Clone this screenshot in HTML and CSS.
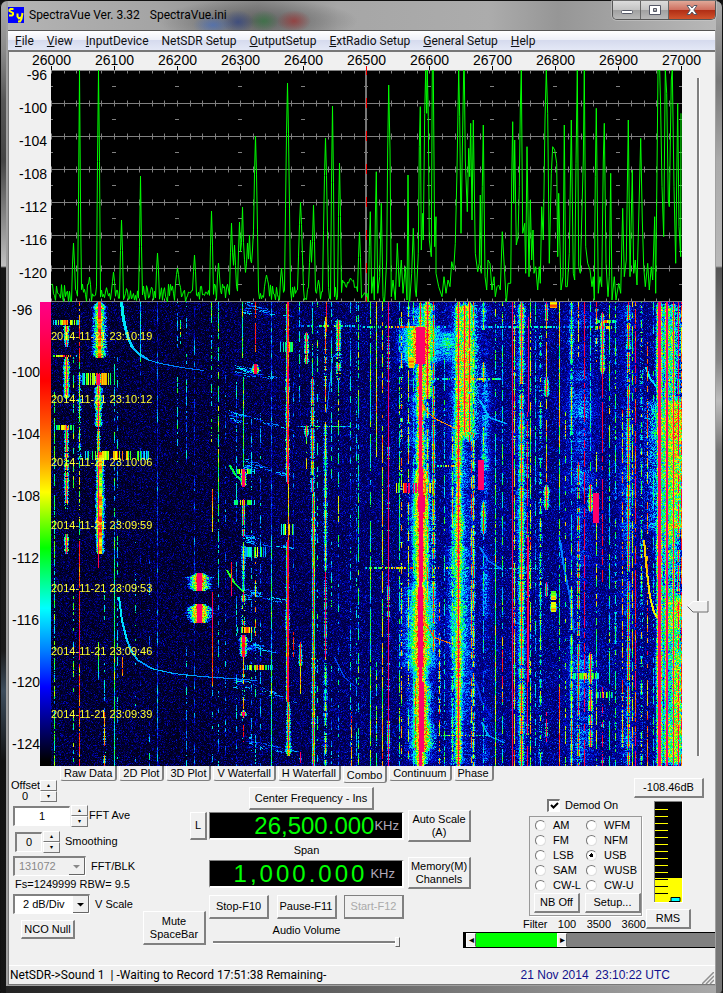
FILE: index.html
```html
<!DOCTYPE html>
<html lang="en">
<head>
<meta charset="utf-8">
<title>SpectraVue Ver. 3.32</title>
<link rel="stylesheet" href="styles.css">
</head>
<body>
<div class="window">
  <header class="titlebar">
    <svg class="app-icon" width="16" height="16" viewBox="0 0 16 16" aria-hidden="true">
      <rect width="16" height="16" fill="#00f"/>
      <path d="M5.500 2H2.500L1.500 3V4L5 6V7.500L4 8.500H1M9.500 6.500V9.500L11 11.500L13.500 10M14.500 6L13.500 12L12 14.500H10" fill="none" stroke="#ff0" stroke-width="2"/>
    </svg>
    <h1 class="title"><span>SpectraVue Ver. 3.32</span><span>SpectraVue.ini</span></h1>
    <div class="caption">
      <button class="cap" aria-label="Minimize"><svg width="14" height="12" viewBox="0 0 14 12"><rect x="1.500" y="6.500" width="11" height="3" rx="1" fill="#fff" stroke="#555866"/></svg></button>
      <button class="cap" aria-label="Maximize"><svg width="14" height="12" viewBox="0 0 14 12"><path d="M1.500 1.500h11v9h-11zM5.500 4.500v3h3v-3z" fill="#fff" fill-rule="evenodd" stroke="#555866"/></svg></button>
      <button class="cap close" aria-label="Close"><svg width="14" height="12" viewBox="0 0 14 12"><path d="M2 1.500h3l2 2.500 2-2.500h3L8.800 6l3.200 4.500H9L7 8l-2 2.500H2L5.200 6z" fill="#fff" stroke="#555866"/></svg></button>
    </div>
  </header>
  <nav class="menu">
    <a href="#"><u>F</u>ile</a><a href="#"><u>V</u>iew</a><a href="#"><u>I</u>nputDevice</a><a href="#">NetSDR Setup</a><a href="#"><u>O</u>utputSetup</a><a href="#"><u>E</u>xtRadio Setup</a><a href="#"><u>G</u>eneral Setup</a><a href="#"><u>H</u>elp</a>
  </nav>
  <main class="client">
    <section class="plots">
      <div class="level-axis"><span>-96</span><span>-100</span><span>-104</span><span>-108</span><span>-112</span><span>-116</span><span>-120</span></div>
      <div class="freq-axis"><span>26000</span><span>26100</span><span>26200</span><span>26300</span><span>26400</span><span class="centre">26500</span><span>26600</span><span>26700</span><span>26800</span><span>26900</span><span>27000</span></div>
      <svg class="spectrum" viewBox="0 0 631 232" preserveAspectRatio="none" role="img" aria-label="Spectrum">
        <rect width="631" height="232" fill="#000"/>
        <path id="grid" fill="none" stroke="#808080"/>
        <path d="M315 0V232" stroke="#777" stroke-width="2"/>
        <path d="M315.500 0V5M315.500 28V38M315.500 61V71M315.500 94V104M315.500 127V137M315.500 160V170M315.500 193V203M315.500 227V232" stroke="#f00"/>
        <path id="trace" fill="none" stroke="#0f0"/>
      </svg>
      <div class="colour-axis">
        <div class="colour-labels"><span>-96</span><span>-100</span><span>-104</span><span>-108</span><span>-112</span><span>-116</span><span>-120</span><span>-124</span></div>
        <div class="colour-bar"></div>
      </div>
      <div class="waterfall">
        <canvas id="waterfall" width="631" height="464"></canvas>
        <div class="stamps"><span>2014-11-21 23:10:19</span><span>2014-11-21 23:10:12</span><span>2014-11-21 23:10:06</span><span>2014-11-21 23:09:59</span><span>2014-11-21 23:09:53</span><span>2014-11-21 23:09:46</span><span>2014-11-21 23:09:39</span></div>
      </div>
      <div class="gain"><input class="vslider" type="range" min="0" max="1000" value="785" aria-label="Level"></div>
    </section>

    <div class="tabs">
      <button>Raw Data</button><button>2D Plot</button><button>3D Plot</button><button>V Waterfall</button><button>H Waterfall</button><button class="on">Combo</button><button>Continuum</button><button>Phase</button>
    </div>

    <section class="deck">
      <div class="fft">
        <div class="row offset"><span class="off">Offset<br>0</span><span class="spin"><button aria-label="Offset up">▴</button><button aria-label="Offset down">▾</button></span></div>
        <div class="row"><input id="ave" class="ave" value="1"><span class="spin"><button aria-label="Average up">▴</button><button aria-label="Average down">▾</button></span><label for="ave">FFT Ave</label></div>
        <div class="row smooth"><input id="smooth" class="num" value="0"><span class="spin"><button aria-label="Smoothing up">▴</button><button aria-label="Smoothing down">▾</button></span><label for="smooth">Smoothing</label></div>
        <div class="row wide"><select id="blk" class="blk" disabled><option>131072</option></select><label for="blk">FFT/BLK</label></div>
        <p class="fs">Fs=1249999 RBW= 9.5</p>
        <div class="row wide"><select id="vs" class="vs"><option>2 dB/Div</option></select><label for="vs">V Scale</label></div>
        <button class="btn nco">NCO Null</button>
      </div>
      <div class="side"><button class="btn lock">L</button><button class="btn mute">Mute<br>SpaceBar</button></div>
      <div class="tuning">
        <button class="btn cf">Center Frequency - Ins</button>
        <output class="led">26,500.000<small>KHz</small></output>
        <span class="cap-text">Span</span>
        <output class="led spaced"><span>1</span><span>,</span><span>0</span><span>0</span><span>0</span><span>.</span><span>0</span><span>0</span><span>0</span><small>KHz</small></output>
        <div class="run"><button class="btn">Stop-F10</button><button class="btn">Pause-F11</button><button class="btn start" disabled>Start-F12</button></div>
        <label class="cap-text" for="vol">Audio Volume</label>
        <input id="vol" class="hslider" type="range" value="100">
      </div>
      <div class="radio-side">
        <div class="radio-top">
          <div class="memory"><button class="btn">Auto Scale<br>(A)</button><button class="btn">Memory(M)<br>Channels</button></div>
          <div class="receiver">
            <button class="btn db">-108.46dB</button>
            <div class="receiver-row">
              <div class="demod">
                <label class="check"><input type="checkbox" checked>Demod On</label>
                <div class="modes">
                  <label><input type="radio" name="m">AM</label><label><input type="radio" name="m">WFM</label>
                  <label><input type="radio" name="m">FM</label><label><input type="radio" name="m">NFM</label>
                  <label><input type="radio" name="m">LSB</label><label><input type="radio" name="m" checked>USB</label>
                  <label><input type="radio" name="m">SAM</label><label><input type="radio" name="m">WUSB</label>
                  <label><input type="radio" name="m">CW-L</label><label><input type="radio" name="m">CW-U</label>
                  <button class="btn">NB Off</button><button class="btn">Setup...</button>
                </div>
                <div class="filter"><span>Filter</span><span>100</span><span>3500</span><span>3600</span></div>
              </div>
              <div class="meter">
                <svg width="29" height="102" viewBox="0 0 29 102" role="img" aria-label="Signal meter">
                  <rect width="29" height="102" fill="#fff"/><rect width="28" height="101" fill="#808080"/>
                  <rect x="1" y="1" width="27" height="100" fill="#000"/><rect x="1" y="77" width="27" height="24" fill="#ff0"/>
                  <path d="M1 8.500h13M1 15.500h13M1 22.500h13M1 29.500h13M1 36.500h13M1 43.500h13M1 50.500h13M1 57.500h13M1 64.500h13M1 71.500h13" stroke="#ff0"/>
                  <path d="M1 78.500h13M1 85.500h13M1 92.500h13" stroke="#000"/>
                  <path d="M15 100.500h2v-4h9v4z" fill="#0ff" stroke="#000"/>
                </svg>
                <button class="btn">RMS</button>
              </div>
            </div>
          </div>
        </div>
        <div class="passband"><button aria-label="Low edge">◂</button><i></i><button aria-label="High edge">▸</button></div>
      </div>
    </section>
    <footer class="status">
      <span>NetSDR-&gt;Sound 1&nbsp; | -Waiting to Record 17:51:38 Remaining-</span>
      <time>21 Nov 2014&nbsp; 23:10:22 UTC</time>
      <svg width="12" height="12" viewBox="0 0 12 12" aria-hidden="true"><path d="M0 12L12 0M4 12L12 4M8 12L12 8" stroke="#909090" stroke-width="1.500"/></svg>
    </footer>
  </main>
</div>
<script src="script.js"></script>
</body>
</html>
```
FILE: styles.css
```css
* { box-sizing: border-box; }
body { margin: 0; background: #111; font: 11px/13px "Liberation Sans", Arial, sans-serif; color: #000; }
button, input, select { font: inherit; color: inherit; margin: 0; padding: 0; border-radius: 0; }
p { margin: 0; }

.window {
  display: flex; flex-direction: column; min-height: 100vh; padding: 0 7px 8px;
  border-radius: 7px 7px 4px 4px; border: 1px solid #111; border-width: 1px 1px 0;
  background:
    linear-gradient(#aaa 0, #8a8a8a 50px, #555 100px, #444 160px, #c0c0c0 265px, #151515 267px, #1b1b1b 650px, #3d4d5c 690px, #121212 760px, #151515 100%) left / 5px 100% no-repeat,
    linear-gradient(#aaa 0, #777 80px, #aaa 160px, #b8b8b8 265px, #555 267px, #888 360px, #bbb 400px, #777 450px, #777 100%) right / 6px 100% no-repeat,
    linear-gradient(90deg, #222, #666 50%, #aaa) bottom / 100% 7px no-repeat,
    #a0a0a0;
}

.titlebar {
  display: flex; align-items: flex-start; height: 29px; margin: 0 -1px 0 0;
  background:
    radial-gradient(ellipse 20px 10px at 205px 24px, #3e6cc999, transparent),
    radial-gradient(ellipse 16px 12px at 230px 21px, #243c8a99, transparent),
    radial-gradient(ellipse 15px 11px at 256px 20px, #2c7b3c99, transparent),
    radial-gradient(ellipse 17px 11px at 286px 20px, #a02c2caa, transparent),
    radial-gradient(ellipse 100px 22px at 250px 20px, #555555cc, transparent),
    linear-gradient(90deg, #b4b4b4 0, #a4a4a4 150px, #8a8a8a 250px, #a6a6a6 330px, #acacac 480px, #969696 550px, #b8b8b8 100%);
}
.app-icon { margin: 6px 5px 0 0; }
.title { display: flex; gap: 10px; margin: 5px auto 0 0; font: 12px/18px Roboto, sans-serif; }
.caption { display: flex; border: 1px solid #555; border-top: 0; border-radius: 0 0 5px 5px; overflow: hidden; box-shadow: 0 0 0 1px #ccc8; }
.cap { display: grid; place-items: center; width: 28px; height: 18px; border: 0; border-right: 1px solid #666; background: linear-gradient(#dcdcdc, #c4c4c4 48%, #a0a0a0 50%, #b8b8b8); }
.cap.close { width: 46px; border: 0; background: linear-gradient(#e0a898, #cf7060 48%, #b02c14 50%, #d0532c); }

.menu {
  display: flex; align-items: center; gap: 13px; height: 20px; padding: 0 7px;
  border-top: 1px solid #555; background: linear-gradient(#fff, #eef0f8 45%, #d6dbee 50%, #e4e8f6);
  font: 12px/18px Roboto, sans-serif;
}
.menu a { color: #111; text-decoration: none; white-space: nowrap; }

.client { flex: 1; display: flex; flex-direction: column; background: #f0f0f0; border: 1px solid #777; border-width: 2px 0 1px 1px; }

.plots { display: grid; grid-template-columns: 42px 1fr 33px; grid-template-rows: 18px 232px 464px; font-size: 14px; line-height: 16px; }
.level-axis { grid-area: 1 / 1 / 3 / 2; display: flex; flex-direction: column; padding: 7px 4px 0 0; text-align: right; }
.level-axis span { line-height: 33px; }
.freq-axis { grid-area: 1 / 2; display: flex; justify-content: space-between; }
.freq-axis span { display: flex; justify-content: center; width: 1px; height: 18px; background: linear-gradient(#000, #000) bottom / 1px 4px no-repeat; }
.freq-axis .centre { background-image: linear-gradient(#f00, #f00); }
.spectrum { grid-area: 2 / 2; display: block; width: 100%; height: 100%; }
.colour-axis { grid-area: 3 / 1; display: flex; justify-content: space-between; }
.colour-labels { display: flex; flex-direction: column; gap: 46px; width: 31px; padding-left: 3px; }
.colour-bar { width: 11px; background: linear-gradient(#ff0088 0, #ff0060 6%, #f00 17%, #ff5000 26%, #ffa000 34%, #ff0 41%, #0f0 53%, #0ff 66%, #0080ff 75%, #00f 83%, #000080 91%, #000 99%); }
.waterfall { grid-area: 3 / 2; position: relative; }
.waterfall canvas { display: block; width: 100%; height: 100%; }
.stamps { position: absolute; inset: 28px auto auto 0; display: flex; flex-direction: column; gap: 50px; font-size: 11px; line-height: 13px; color: #ffff30; }
.gain { grid-area: 1 / 3 / 4 / 4; padding: 26px 6px 10px 5px; display: flex; }

input[type=range] { appearance: none; background: none; }
.vslider { writing-mode: vertical-lr; width: 22px; height: 678px; }
.vslider::-webkit-slider-runnable-track { width: 22px; height: 100%; background: linear-gradient(90deg, #808080 2px, #fff 2px) center / 3px 100% no-repeat; }
.vslider::-webkit-slider-thumb { appearance: none; width: 22px; height: 12px; background: url("data:image/svg+xml,%3Csvg xmlns='http://www.w3.org/2000/svg' width='22' height='12'%3E%3Cpath d='M.5 5.500L6 .5H21.500V11H6z' fill='%23f0f0f0' stroke='%23fff'/%3E%3Cpath d='M.5 5.500L6 11H21V0' fill='none' stroke='%23666'/%3E%3C/svg%3E"); }
.hslider { width: 187px; height: 12px; align-self: center; margin-top: -4px; }
.hslider::-webkit-slider-runnable-track { height: 10px; background: linear-gradient(#808080 2px, #fff 2px) center / 100% 3px no-repeat; }
.hslider::-webkit-slider-thumb { appearance: none; width: 5px; height: 10px; background: #f0f0f0; border: 1px solid #fff; border-right-color: #666; border-bottom-color: #666; }

.tabs { display: flex; align-items: flex-start; gap: 2px; padding-left: 51px; height: 17px; }
.tabs button { height: 15px; padding: 0 3px; line-height: 13px; white-space: nowrap; background: #f0f0f0; border: 1px solid #fff; border-width: 0 2px 1px 1px; border-right-color: #808080; border-bottom-color: #808080; border-radius: 0 0 3px 3px; }
.tabs .on { height: 17px; padding-top: 3px; }

.btn { background: #f0f0f0; border: 1px solid #fff; border-right: 2px solid #808080; border-bottom: 2px solid #808080; white-space: nowrap; text-align: center; }
.btn:disabled { color: #aaa; border: 2px solid #808080; border-top: 1px solid #808080; border-left: 1px solid #808080; }

.deck { flex: 1; display: flex; }
.fft { width: 134px; padding: 0 0 0 4px; display: flex; flex-direction: column; align-items: flex-start; }
.row { display: flex; align-items: center; height: 23px; gap: 1px; white-space: nowrap; }
.offset { margin: -4px 0 2px -2px; }
.off { width: 28px; line-height: 11px; text-align: center; }
.spin { display: flex; flex-direction: column; width: 17px; }
.spin button { height: 11px; padding: 0; font-size: 6px; line-height: 8px; background: #f0f0f0; border: 1px solid #fff; border-right-color: #777; border-bottom-color: #777; }
.ave, .num { height: 20px; text-align: center; border: 2px solid #808080; border-right: 1px solid #fff; border-bottom: 1px solid #fff; }
.ave { width: 57px; background: #fff; }
.num { width: 27px; background: #f0f0f0; }
.smooth { margin: 3px 0 2px 2px; }
.smooth label { margin-left: 4px; }
.wide { gap: 5px; height: 22px; }
select { appearance: none; height: 20px; padding-left: 4px; border: 2px solid #808080; border-right: 1px solid #fff; border-bottom: 1px solid #fff; background: #fff url("data:image/svg+xml,%3Csvg xmlns='http://www.w3.org/2000/svg' width='16' height='17'%3E%3Cpath fill='%23f0f0f0' d='M0 0h16v17H0z'/%3E%3Cpath d='M15.500 0v16.500H0' fill='none' stroke='%23666'/%3E%3Cpath d='M4 7h7L7.500 10.500z'/%3E%3C/svg%3E") right center no-repeat; }
.blk { width: 73px; background-color: #f0f0f0; background-image: url("data:image/svg+xml,%3Csvg xmlns='http://www.w3.org/2000/svg' width='16' height='17'%3E%3Cpath fill='%23f0f0f0' d='M0 0h16v17H0z'/%3E%3Cpath d='M15.500 0v16.500H0' fill='none' stroke='%23666'/%3E%3Cpath d='M4 7h7L7.500 10.500z' fill='%23888'/%3E%3C/svg%3E"); }
.blk:disabled { color: #888; opacity: 1; }
.vs { width: 77px; padding-left: 8px; }
.fs { margin: 1px 0 2px 2px; line-height: 13px; white-space: nowrap; }
.nco { width: 54px; height: 19px; margin: 5px 0 0 8px; }

.side { width: 66px; display: flex; flex-direction: column; justify-content: space-between; padding: 29px 2px 20px 0; }
.lock { align-self: flex-end; width: 17px; height: 28px; }
.mute { width: 63px; height: 34px; }

.tuning { width: 195px; display: flex; flex-direction: column; align-items: stretch; padding-top: 4px; }
.cf { align-self: center; width: 125px; height: 23px; margin: 0 0 2px 10px; }
.led { display: flex; justify-content: flex-end; align-items: center; height: 28px; padding-right: 3px; background: #000; border: 1px solid #808080; border-right: 2px solid #fff; border-bottom: 2px solid #fff; color: #0f0; font-size: 24px; line-height: 25px; }
.led small { font-size: 13px; color: #b0a8b8; }
.spaced { gap: 3px; padding-right: 7px; }
.spaced small { margin-left: 3px; }
.cap-text { align-self: center; line-height: 13px; margin: 4px 0 3px; }
.run { display: flex; justify-content: space-between; margin: 7px 0 1px; }
.run .btn { width: 60px; height: 24px; }

.radio-side { flex: 1; display: flex; flex-direction: column; padding-left: 4px; min-width: 0; }
.radio-top { display: flex; }
.memory { display: flex; flex-direction: column; gap: 15px; padding-top: 27px; }
.memory .btn { width: 63px; height: 32px; }
.receiver { flex: 1; display: flex; flex-direction: column; align-items: flex-end; padding-right: 11px; margin-top: -5px; }
.db { width: 70px; height: 20px; }
.receiver-row { display: flex; margin-right: 13px; }
.demod { width: 123px; padding: 0 4px 0 6px; }
.check { display: flex; align-items: center; gap: 5px; height: 14px; margin: 0 0 4px 18px; }
.check input { appearance: none; width: 13px; height: 13px; border: 2px solid #777; border-right: 1px solid #fff; border-bottom: 1px solid #fff; background: #fff url("data:image/svg+xml,%3Csvg xmlns='http://www.w3.org/2000/svg' width='9' height='9'%3E%3Cpath d='M1 4l2.500 2.500L8 2' fill='none' stroke='%23000' stroke-width='2'/%3E%3C/svg%3E") center no-repeat; }
.modes { display: grid; grid-template-columns: 46px 56px; grid-template-rows: repeat(5, 15px) 20px; column-gap: 5px; height: 100px; padding: 1px 0 0 4px; border: 1px solid #999; box-shadow: 1px 1px #fff; }
.modes label { display: flex; align-items: center; gap: 7px; padding-left: 1px; white-space: nowrap; }
.modes input { appearance: none; flex: none; width: 11px; height: 11px; border-radius: 50%; border: 1px solid #777; border-right-color: #ddd; border-bottom-color: #ddd; background: #fff; }
.modes input:checked { background: radial-gradient(#000 2px, #fff 2px); }
.filter { display: flex; justify-content: space-between; margin: 2px -4px 0 -6px; line-height: 13px; }
.meter { display: flex; flex-direction: column; align-items: center; gap: 6px; padding-top: 3px; }
.meter .btn { width: 45px; height: 20px; }
.passband { display: flex; height: 16px; margin: 1px 0 0 55px; border: 1px solid #000; border-left-width: 3px; border-right: 0; background: #808080; }
.passband button { width: 10px; border: 1px solid #fff; border-right-color: #666; background: #f0f0f0; font-size: 10px; line-height: 10px; }
.passband i { width: 81px; background: #0f0; }

.status { display: flex; align-items: flex-end; height: 19px; padding: 0 1px; border-top: 1px solid #fff; font: 12px/17px Roboto, sans-serif; white-space: nowrap; }
.status time { margin: 0 32px 0 auto; color: #10108c; font: 12px/17px "Liberation Sans", sans-serif; }
```
FILE: script.js
```js
// Repeatable pseudo-random source.
let seed = 12345;
function rnd() {
  seed = (seed * 1664525 + 1013904223) >>> 0;
  return seed / 4294967296;
}

// Graticule: a line each 4 dB with minor ticks on it, dashes halfway between.
let grid = "";
for (let r = 0; r <= 7; r++) {
  const y = Math.min(r * 33 + 0.5, 231.5);
  grid += `M0 ${y}H631`;
  for (let i = 0; i <= 50; i++) grid += `M${Math.round(i * 12.61) + 0.5} ${y - 3}v6`;
  for (let i = 0; i <= 10; i++) grid += `M${i * 63 - 2} ${y + 16}h4`;
}
document.getElementById("grid").setAttribute("d", grid);

// Lower half of the span: [x, top, half width at the base].
const peaks = [
  [22,173,2],[28,0,1.5],[38,207,2],[47,0,2],[62,202,2],[70,150,2],[89,106,1.5],[106,183,2],[126,198,3],
  [143,185,2],[160,141,2],[167,193,2],[180,153,2],[183,175,2],[188,152,2],[191,137,2],[196,173,2],
  [198,165,2],[201,180,2],[204,66,3],[215,205,3],[230,198,2],[236,13,3],[249,132,3],[259,170,2],
  [262,135,2],[267,210,2],[274,68,3],[281,36,2],[288,93,2],[299,208,5],[308,162,2]];
let d = "";
for (let x = 0; x < 316; x++) {
  let y = 214 + rnd() * 18;
  if (x > 186 && x < 203) y = 185 + rnd() * 20;
  if (x > 290 && x < 306) y = 208 + rnd() * 10;
  for (const [px, top, w] of peaks) {
    const t = Math.abs(x - px);
    if (t < w) y = Math.min(y, top + (225 - top) * Math.pow(t / w, 1.3));
  }
  d += (x ? "L" : "M") + (x + 0.5) + " " + y.toFixed(1);
}
// Upper half of the span: turning points in thirds of a pixel.
const turns = [
  15,700,19,730,22,560,25,455,29,700,34,650,37,720,40,480,43,335,47,700,53,650,58,430,63,710,67,740,74,600,77,270,80,75,84,270,88,710,
  93,660,100,720,106,550,112,680,118,600,123,700,130,620,135,720,138,345,142,740,149,640,154,505,160,690,163,710,169,580,172,260,175,140,
  178,570,182,460,184,540,188,160,191,0,194,160,196,0,199,170,202,540,208,590,211,0,214,0,218,560,222,470,222,640,230,680,240,710,246,650,
  252,700,258,660,264,680,269,605,275,630,280,550,285,330,290,0,293,170,297,520,300,330,305,0,307,0,310,300,316,455,320,265,323,350,326,190,
  330,480,334,180,340,580,347,635,352,610,355,405,358,640,361,380,364,195,369,650,374,690,378,600,384,610,390,690,396,650,400,710,405,680,
  410,675,415,690,421,515,427,620,433,730,438,670,446,670,449,360,452,185,455,430,458,240,463,555,468,530,472,380,475,150,478,0,482,520,488,
  490,491,640,495,260,501,650,505,420,509,600,513,510,516,640,521,620,527,690,532,620,535,670,539,440,544,540,549,180,553,0,557,160,562,610,
  568,340,572,260,578,270,584,310,587,590,590,400,597,690,603,650,607,195,611,680,616,680,622,580,628,180,634,640,638,660,642,310,646,0,650,
  620,655,640,659,480,664,300,667,0,671,560,677,610,684,630,690,680,694,650,697,720,700,350,703,145,709,700,714,650,719,680,724,300,727,190,
  732,610,738,710,742,650,746,340,750,720,757,650,762,720,770,670,776,700,782,445,787,650,793,600,799,180,804,650,811,330,815,640,820,600,
  825,675,830,480,836,235,841,480,845,620,850,680,857,610,862,690,868,620,872,660,878,470,881,700,886,240,888,0,893,0,896,150,900,380,905,530,
  910,20,914,100,919,420,922,440,928,60,931,0,936,380,941,610,947,130,951,500,956,590,959,160];
for (let i = 0; i < turns.length; i += 2) {
  const x = Math.min(630, 311 + turns[i] / 3), y = Math.max(0, turns[i + 1] / 3 - 10);
  d += `L${x.toFixed(1)} ${y.toFixed(1)}`;
}
document.getElementById("trace").setAttribute("d", d);

// Waterfall: levels from 0 to 1, painted through the colour scale.
const W = 631, H = 464;
const field = new Float32Array(W * H);
for (let y = 0; y < H; y++) {
  for (let x = 0; x < W; x++) {
    const base = 0.05 + 0.08 * Math.min(1, Math.max(0, (x - 140) / 260));
    field[y * W + x] = base + rnd() * rnd() * 0.22;
  }
}
function put(x, y, v) {
  x = Math.round(x); y = Math.round(y);
  if (x >= 0 && x < W && y >= 0 && y < H) field[y * W + x] = Math.max(field[y * W + x], v);
}
// Broad glow: slow fading along the time axis, speckled, tapering to both sides.
function glow(x, y0, y1, level, half, speckle = 0.22) {
  let slow = 0, row = 0;
  for (let y = y0; y < y1; y++) {
    slow = slow * 0.97 + (rnd() - 0.5) * 0.05;
    row = row * 0.4 + (rnd() - 0.5) * 0.1;
    const edge = Math.min(1, (y - y0 + 3) / 9, (y1 - y + 3) / 9);
    for (let k = -half; k <= half; k++) {
      const fall = Math.pow(1 - Math.abs(k) / (half + 1), 0.75);
      put(x + k, y, (level + slow + row) * fall * edge + (rnd() - 0.5) * speckle);
    }
  }
}
// Carrier: centre x, first row, last row, level, core half width, halo width, on-time.
function carrier(x, y0, y1, level, core = 0, halo = 0, duty = 1) {
  let on = true, drift = 0, swell = 0;
  for (let y = y0; y < y1; y++) {
    if (rnd() < 0.4) on = rnd() < duty;
    drift = drift * 0.8 + (rnd() - 0.5) * 0.14;
    swell = swell * 0.95 + (rnd() - 0.5) * 0.16;
    for (let k = -core; k <= core; k++) if (on) put(x + k, y, level + drift * (level > 0.9 ? 0.2 : 1.2));
    const taper = Math.min(1, (y - y0 + 2) / 6, (y1 - y + 2) / 6);
    const reach = halo * (0.75 + swell + rnd() * 0.3) * taper;
    for (let k = 1; k <= reach; k++) {
      const fall = Math.pow(1 - k / (reach + 1), 0.9);
      const v = level * 0.8 * fall + (rnd() - 0.5) * 0.3;
      if (on || rnd() < 0.4) put(x - core - k, y, v);
      if (on || rnd() < 0.4) put(x + core + k, y, v + (rnd() - 0.5) * 0.2);
    }
  }
}
function curve(points, level, thick = 1) {
  for (let i = 0; i + 3 < points.length; i += 2) {
    const [x0, y0, x1, y1] = points.slice(i, i + 4);
    const n = Math.ceil(Math.hypot(x1 - x0, y1 - y0) * 2);
    for (let s = 0; s <= n; s++) {
      for (let t = 0; t < thick; t++) put(x0 + (x1 - x0) * s / n + t, y0 + (y1 - y0) * s / n, level - i * 0.008 + (rnd() - 0.5) * 0.05);
    }
  }
}
function comb(x0, x1, y0, y1, level) {
  for (let x = x0; x < x1; x++) {
    if (rnd() < 0.4) continue;
    const mid = 1 - Math.abs((x - x0) / (x1 - x0) - 0.5);
    const v = level * mid + (rnd() - 0.5) * 0.2;
    for (let y = y0; y < y1; y++) put(x, y, v);
  }
}
function wisp(x0, y0, x1, y1) {
  for (let i = 0; i < 30; i++) {
    const t = rnd() * rnd(), x = x0 + (x1 - x0) * t, y = y0 + (y1 - y0) * t + (rnd() - 0.4) * 12 * (1 - t);
    const n = 2 + rnd() * 8, v = 0.22 + rnd() * 0.2;
    for (let k = 0; k < n; k++) if (rnd() < 0.8) put(x + k, y + k * 0.2, v + (rnd() - 0.5) * 0.1);
  }
}

// Wide glows behind the strong signals.
glow(369, 0, 464, 0.36, 20);
glow(369, 20, 64, 0.62, 30);
glow(369, 280, 370, 0.5, 24);
glow(410, 0, 464, 0.32, 22);
glow(414, 0, 140, 0.6, 17, 0.36);
glow(407, 240, 350, 0.5, 14, 0.3);
glow(396, 26, 62, 0.42, 26);
glow(618, 0, 464, 0.5, 16, 0.34);
glow(624, 95, 230, 0.66, 36, 0.34);
glow(626, 290, 464, 0.62, 10, 0.34);
glow(470, 0, 464, 0.3, 10);
glow(530, 0, 464, 0.22, 26);
glow(576, 0, 464, 0.22, 16);
glow(434, 0, 464, 0.26, 8);

[
  [3,90,464,.5,0,0,.7],[15,20,45,1,0,3,.9],[15,55,97,1,0,4,.9],[15,123,207,1,0,3,.9],[15,232,252,1,0,3],
  [22,55,190,.5,0,0,.7],[22,285,464,.5,0,0,.5],[28,0,60,.85,0,0,.7],[28,60,238,.62,0,0,.6],[28,238,464,.86,0,0,.85],
  [28,70,160,.5,0,2,.4],[48,0,56,.9,1,8],[47,72,83,1,1,4],[47,83,125,.98,0,5],[47,125,150,.85,0,2],
  [47,150,252,.97,0,4],[49,150,252,.74,1,4],[47,252,266,.95],[47,340,378,.5],[63,55,238,.4,0,0,.5],
  [63,238,464,.5],[66,55,464,.36,0,0,.5],[53,410,464,.82,0,1,.9],[53,290,410,.42,0,0,.4],[71,355,378,.8,0,0,.7],
  [89,0,60,.48],[89,60,464,.18,0,0,.4],[84,215,464,.48,0,0,.15],[106,0,464,.27],[98,240,464,.3,0,0,.3],
  [126,0,160,.42,0,0,.5],[129,18,42,.5,0,0,.7],[135,0,160,.38,0,0,.6],[135,345,464,.38,0,0,.5],[143,0,464,.24,0,0,.8],
  [160,0,140,.48,0,0,.45],[161,187,230,.74],[161,290,384,.86],[161,384,464,.45,0,0,.3],[167,0,240,.5,0,0,.8],
  [167,240,464,.4,0,0,.4],[180,260,294,.88],[148,271,289,1,2,14],[148,302,321,1,2,14],
  [174,70,464,.28,0,0,.4],[185,80,464,.36,0,0,.5],[191,0,56,.5],[192,75,165,.5],[192,167,185,1,1,2],[192,197,235,1,0,2,.9],
  [192,240,290,.65,0,2,.8],[192,290,330,.95,0,2,.7],[192,333,355,.9,1,4],[192,355,440,.75,0,1,.8],[192,410,414,1,1,5],
  [204,0,50,.88,0,1,.8],[204,62,72,.95,1,4],[204,245,340,.7,0,1,.6],[204,340,464,.4,0,0,.5],
  [200,100,464,.34,0,0,.5],[209,100,464,.33,0,0,.5],[220,0,238,.3],[220,238,464,.45],
  [236,0,182,.97,0,2],[237,0,182,.8],[237,182,238,.74,0,1],[236,238,400,.92,0,2],[237,238,400,.9],[237,400,454,.88,0,3],[242,330,355,.88,0,1,.7],
  [248,0,100,.4,0,0,.7],[249,340,365,.85,0,2],[249,365,392,.7,0,1],[249,450,461,.95,0,1],[242,80,300,.3,0,0,.5],
  [255,30,62,1,0,3,.9],[255,123,135,.95,0,3],[255,135,170,.6,0,0,.5],[261,0,75,.5,0,0,.7],[261,75,190,.9,0,2,.9],
  [262,190,464,.9,0,2],[263,190,464,.5],[266,0,464,.45,0,0,.4],[274,15,110,.72,0,1,.8],[274,120,270,.65,0,2],[275,0,30,.9],
  [274,270,355,.95,0,1],[274,355,464,.65,0,2,.7],[280,0,180,.42,0,0,.7],[280,240,464,.35,0,0,.4],
  [287,15,78,.96,0,3,.9],[287,78,240,.5,0,0,.7],[287,240,464,.35,0,0,.5],[299,0,464,.34,0,0,.5],[305,0,464,.35,0,0,.5],
  [307,0,464,.48,0,0,.6],[300,410,464,.8,0,0,.6],
  [319,0,464,.52,0,0,.85],[325,0,155,.6],[325,360,464,.5,0,0,.6],[331,0,150,.65,0,0,.6],[331,150,464,.66,0,0,.9],
  [337,0,464,.98,0,1],[348,0,464,.5,0,0,.6],[350,10,464,.68,0,1,.5],[357,0,464,.6,0,1,.7],[362,0,464,.45,0,1,.7],
  [369,0,25,.9,0,3],[369,25,62,1,4,15],[360,55,66,.75,2,4],[369,62,165,1,1,6,1],[369,165,464,1,1,9,1],[370,165,280,1,1,11],[370,195,210,1,3,8],[376,0,97,.98,0,8],
  [369,285,365,1,2,12],[364,380,450,.85,0,3,.8],[371,380,450,1,1,12],[382,0,350,.9,0,2,.85],[376,100,300,.7,0,2,.7],
  [388,300,464,.75,0,1,.6],[393,30,464,.42,0,0,.6],[401,130,464,.58,0,2,.8],[407,0,464,1,0,6],[413,0,130,.95,0,5,.9],
  [418,0,140,.93,0,5,.9],[420,130,464,.8,0,1,.7],[422,0,464,.7,0,2,.7],[432,0,28,.6,0,3],[432,60,80,.75,0,3],
  [432,125,160,.65,0,3,.8],[432,200,232,.8,0,4],[432,232,464,.42,0,0,.6],[444,0,250,.5,0,0,.6],[444,250,464,.55],
  [451,0,464,.48,0,0,.7],[451,335,400,.85,0,0,.7],[461,0,464,.93],[463,0,464,.68,0,1,.8],[470,0,55,.96,0,4],[470,55,464,.92,0,4,.9],
  [477,15,110,.97],[476,110,464,.92,0,1,.95],[477,235,380,1,0,1],[479,0,464,.62,0,0,.7],[484,0,464,.4,0,0,.6],[489,30,464,.54,0,2,.6],
  [495,0,20,1,0,2],[495,75,95,1,0,3],[495,20,180,.68,0,0,.75],[495,183,208,1,0,4],[495,280,295,1,0,2],[495,410,440,.97,0,1,.8],
  [502,0,6,.76,3,1],[502,289,298,.66,2,2],[502,300,310,.7,2,2],[508,0,145,.66],[508,145,385,.5,0,0,.6],[508,385,464,.8],
  [514,110,464,.6,0,0,.4],[520,0,140,.6,0,3,.9],[520,140,285,.45,0,0,.7],[520,285,464,.7,0,2,.85],[527,0,55,.75,0,1,.8],
  [527,160,464,.92,0,2,.7],[533,0,464,.93,0,0,.85],[539,0,180,.45,0,0,.7],[539,182,210,.95,0,3],[539,350,445,.96,0,3,.8],
  [545,0,60,.8,0,1,.5],[545,150,464,.58,0,0,.7],[551,10,72,.98,0,3],[551,72,280,.92,0,0,.85],[551,385,464,.95,0,1,.8],
  [558,0,464,.5,0,0,.7],[564,0,464,.5,0,1,.6],[571,100,464,.76,0,1,.6],[577,0,464,.92,0,2,.85],[581,0,464,.62,0,0,.75],
  [584,0,464,.9,0,0,.85],[590,0,464,.55,0,2,.45],[596,40,464,.75,0,0,.6],[602,0,464,.42,0,1,.6],
  [608,0,464,1,1,3],[615,0,464,1,0,3],[616,0,464,1],[622,0,464,1,0,2],[627,0,130,.95,0,1,.9],[627,130,464,.97,0,2,.7],[630,0,464,.82,0,1,.8]
].forEach(c => carrier(...c));

// Solid blocks and combs.
for (let y = 158; y < 188; y++) for (let x = 427; x < 433; x++) put(x, y, 1);
for (let y = 191; y < 221; y++) for (let x = 542; x < 548; x++) put(x, y, 1);
comb(1,28,18,23,.8); comb(1,26,53,55,.9); comb(4,24,123,128,.8); comb(31,66,71,83,.85); comb(33,98,149,158,.75);
comb(229,244,40,50,.7); comb(229,244,222,233,.7); comb(181,204,167,172,.7); comb(181,204,198,203,.7); comb(191,218,245,255,.6);
comb(186,204,325,331,.8); comb(193,222,363,368,.8); comb(345,383,181,191,1.2); comb(544,564,18,21,.8); comb(540,562,24,27,.9); comb(544,562,390,396,.7);
comb(311,395,24,26,.8); comb(395,560,24,26,.5); comb(383,452,76,78,.75); comb(313,420,265,267,.85); comb(420,500,266,267,.5);
comb(386,412,163,165,.8); comb(380,440,433,434,.7); comb(245,311,23,25,.6); comb(245,300,124,125,.6); comb(517,552,371,377,.7);

// Drifting sounders.
curve([69,0,71,17,75,34,80,45,86,51,95,57], .43, 3);
curve([95,57,109,61,130,65,152,68], .36, 1);
curve([67,295,70,318,75,338,80,350,86,358,100,366], .42, 2);
curve([100,366,122,371,150,374,179,376,205,378], .38, 1);
curve([366,85,370,98,374,108,385,117,404,126], .8);
curve([374,321,383,335,399,341], .8);
curve([592,238,595,270,598,295,602,310,606,316], .7, 2);
curve([594,65,598,76,606,86], .42, 2);
curve([428,98,437,115,454,121], .38, 2);
curve([428,245,436,258,450,267], .34, 2);
curve([508,238,512,265,518,295,522,330], .34, 2);
curve([430,420,436,433,452,440], .36, 2);
curve([178,163,183,172,194,182], .52, 2);
curve([175,268,182,280,192,290], .55, 2);
curve([286,50,281,55,278,85,275,110], .35);
curve([283,355,293,375,305,385], .3);
curve([424,380,430,400,440,415], .28, 2);
wisp(190,3,240,14); wisp(182,65,235,78); wisp(178,113,240,127); wisp(192,160,250,176);
wisp(190,235,245,246); wisp(192,290,245,300); wisp(192,340,225,350); wisp(182,378,250,402); wisp(195,438,255,452);

const stops = [[0,0,0,0],[.08,0,0,35],[.16,0,0,110],[.26,0,10,220],[.34,0,120,255],[.43,0,240,255],[.54,0,255,40],[.66,240,255,0],[.77,255,140,0],[.88,255,10,0],[.96,255,0,100],[1.2,255,0,128]];
const lut = [];
for (let i = 0; i <= 256; i++) {
  const v = i / 256;
  let k = 1;
  while (stops[k][0] < v) k++;
  const a = stops[k - 1], b = stops[k], t = (v - a[0]) / (b[0] - a[0]);
  lut.push([1, 2, 3].map(c => a[c] + (b[c] - a[c]) * t));
}
const ctx = document.getElementById("waterfall").getContext("2d");
const image = ctx.createImageData(W, H);
for (let i = 0; i < W * H; i++) {
  const c = lut[Math.round(Math.min(1, Math.max(0, field[i])) * 256)];
  image.data[i * 4] = c[0]; image.data[i * 4 + 1] = c[1]; image.data[i * 4 + 2] = c[2]; image.data[i * 4 + 3] = 255;
}
ctx.putImageData(image, 0, 0);
```
